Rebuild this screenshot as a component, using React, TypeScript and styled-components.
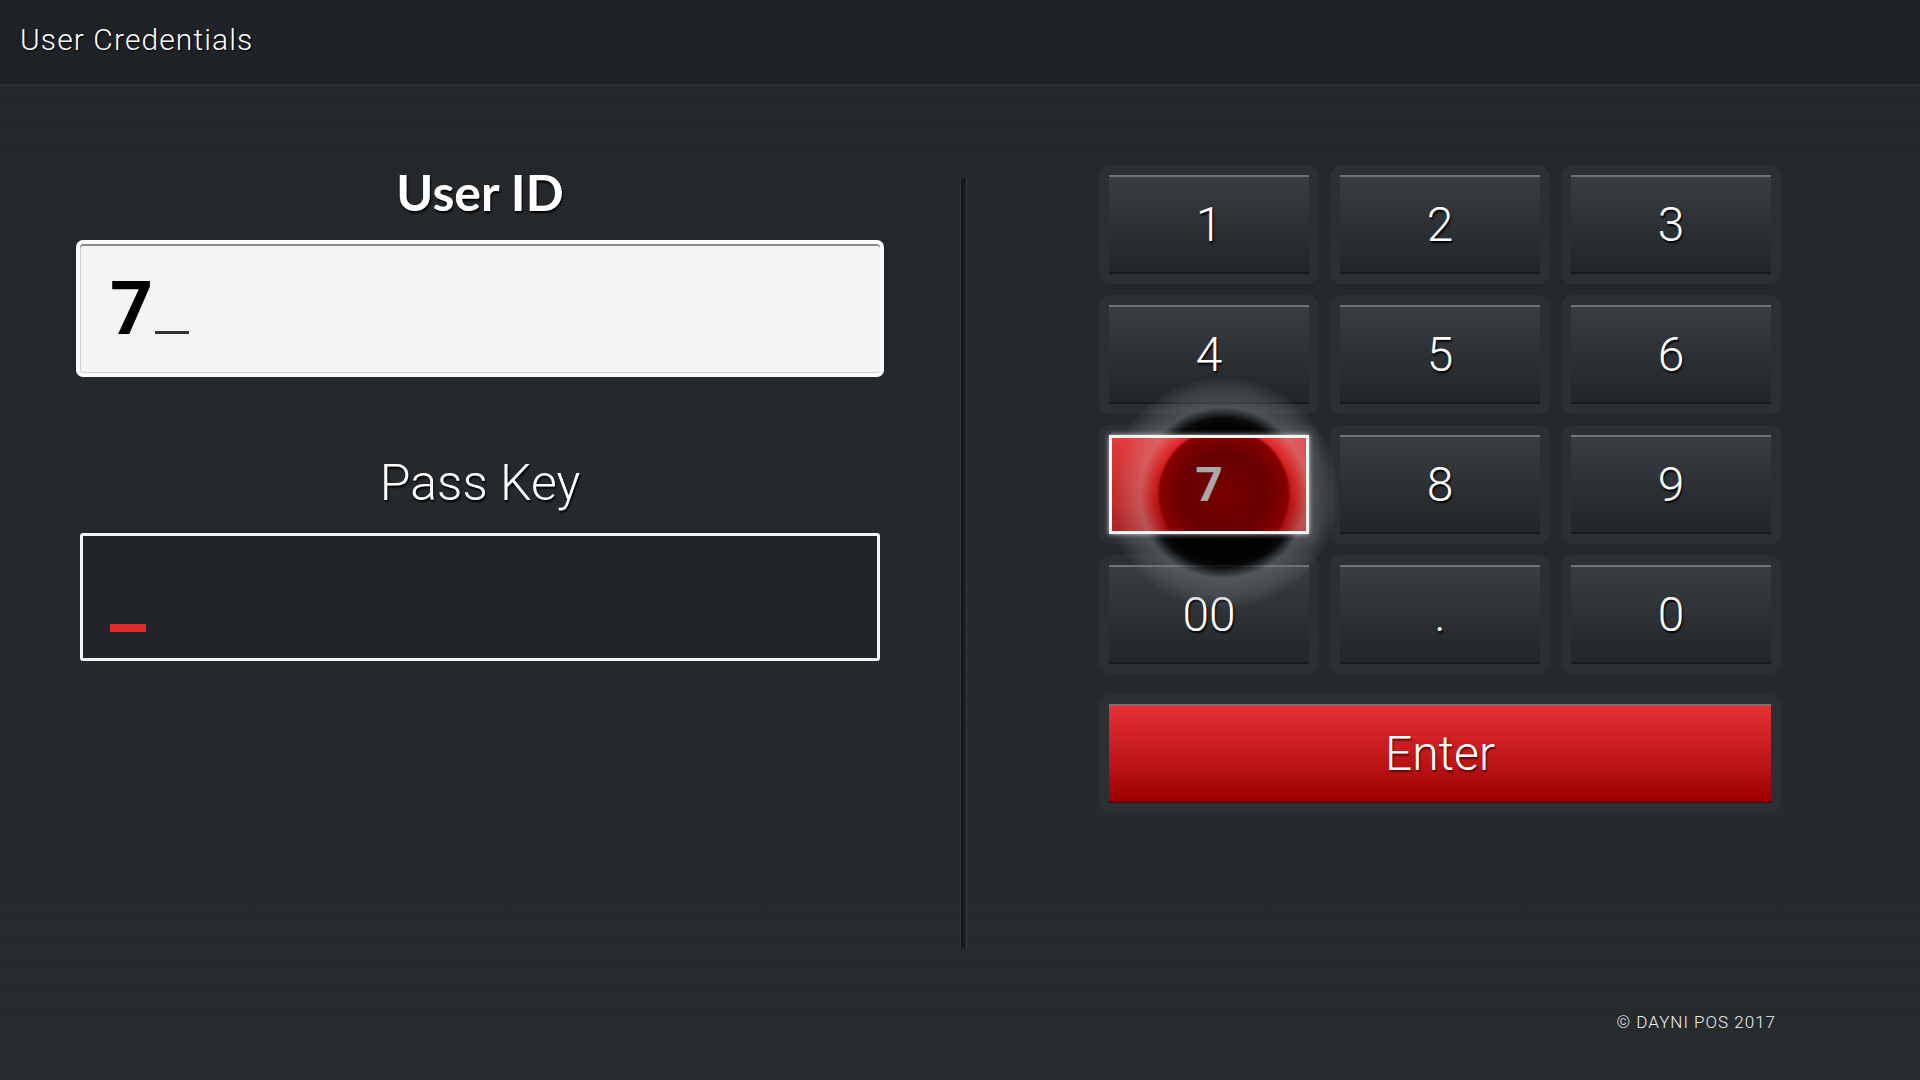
import styled, { createGlobalStyle } from 'styled-components';

const keys = ['1', '2', '3', '4', '5', '6', '7', '8', '9', '00', '.', '0'];
const activeKey = '7';

const GlobalStyle = createGlobalStyle`
  html, body {
    margin: 0;
    padding: 0;
    background: #24282c;
  }
  * {
    box-sizing: border-box;
  }
`;

const Page = styled.div`
  width: 1920px;
  height: 1080px;
  display: flex;
  flex-direction: column;
  overflow: hidden;
  font-family: Roboto, 'Open Sans', sans-serif;
  color: #fff;
  background:
    repeating-linear-gradient(0deg, rgba(255, 255, 255, 0.012) 0 1px, transparent 1px 3px),
    linear-gradient(180deg, #23272b 0%, #252a2e 100%);
`;

const Header = styled.header`
  height: 86px;
  flex-shrink: 0;
  display: flex;
  align-items: center;
  padding: 0 0 6px 20px;
  background: #1f2226;
  border-bottom: 2px solid #2d3136;
  font-size: 30px;
  font-weight: 300;
  letter-spacing: 1.1px;
  text-shadow: 1px 1px 2px #000;
`;

const Main = styled.main`
  flex: 1;
  display: flex;
  align-items: flex-start;
  padding-left: 76px;
`;

const LeftColumn = styled.section`
  width: 808px;
  padding-top: 76px;
  display: flex;
  flex-direction: column;
  align-items: center;
`;

const FieldLabel = styled.h2<{ $bold?: boolean }>`
  margin: 0;
  height: 60px;
  line-height: 60px;
  font-family: ${p => (p.$bold ? "Lato, Roboto, sans-serif" : "Roboto, sans-serif")};
  font-size: 50px;
  font-weight: ${p => (p.$bold ? 700 : 300)};
  color: #fff;
  text-shadow: 1px 2px 2px #000;
`;

const UserIdBox = styled.div`
  width: 808px;
  height: 137px;
  margin-top: 18px;
  border: 4px solid #fbfbfb;
  border-radius: 7px;
  background: #f4f4f4;
  display: flex;
  align-items: center;
  padding-left: 30px;
  box-shadow: inset 0 2px 0 #8a8a8a, inset 1px 0 0 #cfcfcf, inset 0 -1px 0 #cfcfcf;
`;

const UserIdValue = styled.span`
  font-family: Roboto, sans-serif;
  font-size: 75px;
  font-weight: 700;
  line-height: 1;
  color: #000;
`;

const Caret = styled.span<{ $color: string; $width: number; $height: number }>`
  display: inline-block;
  width: ${p => p.$width}px;
  height: ${p => p.$height}px;
  background: ${p => p.$color};
`;

const UserCaret = styled(Caret)`
  margin-left: 2px;
  vertical-align: baseline;
`;

const PassKeyBox = styled.div`
  width: 800px;
  height: 128px;
  margin-top: 20px;
  border: 3px solid #f5f5f5;
  border-radius: 3px;
  background: #212428;
  display: flex;
  align-items: flex-end;
  padding: 0 0 26px 27px;
`;

const Divider = styled.div`
  width: 5px;
  height: 771px;
  margin: 92px 0 0 77px;
  border-radius: 3px;
  background: #1a1d20;
  box-shadow: 1px 0 0 #3a3e42, -1px 0 0 #33373b, inset 1px 0 1px #111316;
`;

const RightColumn = styled.section`
  width: 682px;
  margin-left: 133px;
  padding-top: 79px;
  display: flex;
  flex-direction: column;
`;

const Keypad = styled.div`
  position: relative;
  display: grid;
  grid-template-columns: repeat(3, 220px);
  grid-auto-rows: 119px;
  gap: 11px;
`;

const KeyWell = styled.div`
  padding: 10px;
  border-radius: 12px;
  background: #2c3034;
`;

const Key = styled.button<{ $active?: boolean }>`
  position: relative;
  width: 100%;
  height: 99px;
  padding: 0;
  display: flex;
  align-items: center;
  justify-content: center;
  font-family: Roboto, sans-serif;
  font-size: 48px;
  font-weight: ${p => (p.$active ? 700 : 300)};
  color: ${p => (p.$active ? '#a9a9a9' : '#fff')};
  text-shadow: ${p => (p.$active ? 'none' : '1px 2px 2px #000')};
  cursor: pointer;
  border: none;
  border-top: 2px solid #6f7275;
  border-bottom: 2px solid #17191b;
  background: linear-gradient(180deg, #3a3e42 0%, #2c2f33 55%, #232629 100%);
  ${p =>
    p.$active &&
    `
    z-index: 2;
    border: 3px solid #f4f4f4;
    box-shadow: 0 0 5px rgba(255, 255, 255, 0.75);
    background:
      radial-gradient(circle at 112px 56px, #7a0000 0px, #660000 40px, #880000 64px, rgba(140, 0, 0, 0) 67px),
      radial-gradient(circle at 112px 56px, rgba(215, 215, 220, 0) 68px, rgba(215, 215, 220, 0.32) 84px, rgba(215, 215, 220, 0.1) 110px),
      linear-gradient(180deg, #e42a2a 0%, #c41818 60%, #a81212 100%);
  `}
`;

const Ripple = styled.div`
  position: absolute;
  left: 8px;
  top: 212px;
  width: 232px;
  height: 232px;
  border-radius: 50%;
  z-index: 1;
  pointer-events: none;
  background: radial-gradient(
    circle closest-side,
    rgba(0, 0, 0, 0.92) 0%,
    rgba(0, 0, 0, 0.96) 58%,
    rgba(0, 0, 0, 0.8) 64%,
    rgba(110, 116, 122, 0.5) 74%,
    rgba(110, 116, 122, 0.32) 88%,
    rgba(110, 116, 122, 0.1) 97%,
    rgba(110, 116, 122, 0) 100%
  );
`;

const EnterWell = styled(KeyWell)`
  margin-top: 20px;
  height: 119px;
`;

const EnterButton = styled.button`
  width: 100%;
  height: 99px;
  padding: 0;
  border: none;
  border-top: 2px solid #8c6a6a;
  border-bottom: 2px solid #6a0000;
  background: linear-gradient(180deg, #e53034 0%, #c81c20 45%, #9d0000 100%);
  font-family: Roboto, sans-serif;
  font-size: 48px;
  font-weight: 300;
  color: #fff;
  text-shadow: 1px 2px 2px rgba(60, 0, 0, 0.8);
  cursor: pointer;
`;

const Footer = styled.footer`
  margin-top: 199px;
  padding-right: 5px;
  text-align: right;
  font-size: 17px;
  font-weight: 300;
  letter-spacing: 1px;
  line-height: 20px;
  color: #f0f0f0;
`;

export default function App() {
  return (
    <>
      <GlobalStyle />
      <Page>
        <Header>User Credentials</Header>
        <Main>
          <LeftColumn>
            <FieldLabel $bold>User ID</FieldLabel>
            <UserIdBox>
              <UserIdValue>
                7<UserCaret $color="#333" $width={34} $height={3} />
              </UserIdValue>
            </UserIdBox>
            <FieldLabel style={{ marginTop: 76 }}>Pass Key</FieldLabel>
            <PassKeyBox>
              <Caret $color="#e12b2b" $width={36} $height={8} />
            </PassKeyBox>
          </LeftColumn>
          <Divider />
          <RightColumn>
            <Keypad>
              {keys.map(k => (
                <KeyWell key={k}>
                  <Key $active={k === activeKey}>{k}</Key>
                </KeyWell>
              ))}
              <Ripple />
            </Keypad>
            <EnterWell>
              <EnterButton>Enter</EnterButton>
            </EnterWell>
            <Footer>© DAYNI POS 2017</Footer>
          </RightColumn>
        </Main>
      </Page>
    </>
  );
}
